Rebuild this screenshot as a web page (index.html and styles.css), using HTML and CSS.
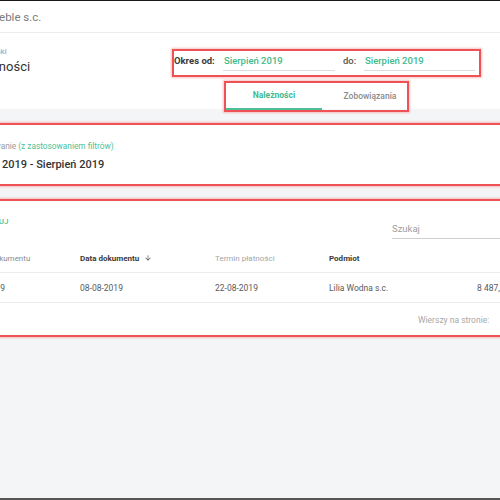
FILE: index.html
```html
<!DOCTYPE html>
<html lang="pl">
<head>
<meta charset="utf-8">
<title>Należności</title>
<link rel="stylesheet" href="styles.css">
</head>
<body>
<div class="page">
  <header class="topbar"><span class="company">Meble s.c.</span></header>
  <section class="subheader">
    <div class="titles">
      <div class="crumb">Rozrachunki</div>
      <h1 class="title">Należności</h1>
    </div>
    <div class="period hl">
      <span class="plabel">Okres od:</span>
      <div class="pinput">Sierpień 2019</div>
      <span class="plabel plabel-to">do:</span>
      <div class="pinput pinput-2">Sierpień 2019</div>
    </div>
  </section>
  <nav class="tabsrow">
    <div class="tabs hl">
      <div class="tab active">Należności</div>
      <div class="tab">Zobowiązania</div>
    </div>
  </nav>
  <section class="card card-summary hl">
    <div class="sum-label">Podsumowanie <span class="green">(z zastosowaniem filtrów)</span></div>
    <div class="sum-value">Sierpień 2019 - Sierpień 2019</div>
  </section>
  <section class="card card-table hl">
    <div class="toolbar">
      <span class="export">EKSPORTUJ</span>
      <div class="search">Szukaj</div>
    </div>
    <div class="trow thead">
      <span class="th-muted">Numer dokumentu</span>
      <span class="th-bold">Data dokumentu<svg class="sort" width="8" height="8" viewBox="0 0 24 24"><path d="M20 12l-1.41-1.41L13 16.17V4h-2v12.17l-5.58-5.59L4 12l8 8 8-8z" fill="#555"/></svg></span>
      <span class="th-light">Termin płatności</span>
      <span class="th-bold">Podmiot</span>
      <span class="th-bold num">Kwota</span>
    </div>
    <div class="trow">
      <span>FV/1/2019</span>
      <span>08-08-2019</span>
      <span>22-08-2019</span>
      <span>Lilia Wodna s.c.</span>
      <span>8 487,00 zł</span>
    </div>
    <div class="tfoot">Wierszy na stronie:</div>
  </section>
</div>
</body>
</html>
```
FILE: styles.css
```css
* { box-sizing: border-box; margin: 0; padding: 0; }
body { margin: 0; font-family: Roboto, "Liberation Sans", sans-serif; }
.page {
  width: 500px; height: 500px; overflow: hidden;
  background: #f4f5f7;
  border-top: 1px solid #1a1a1a;
  border-bottom: 2px solid #555;
}
.topbar {
  height: 32px; background: #fff; border-bottom: 1px solid #ececec;
  display: flex; align-items: center; padding-top: 1px;
}
.company { margin-left: -11px; font-size: 11.5px; color: #7b7b7b; white-space: nowrap; }
.subheader {
  height: 49px; background: #fff; border-bottom: 1px solid #ececec;
  display: flex; align-items: flex-start;
}
.titles { flex: 0 0 206px; margin-left: -34px; padding-top: 13px; white-space: nowrap; }
.crumb { margin-left: -3px; font-size: 8px; line-height: 12px; color: #9a9a9a; }
.title { font-size: 13px; line-height: 18px; font-weight: 400; color: #333; }
.hl { border: 2px solid #ef5254; box-shadow: 0 0 2px 1px rgba(239, 82, 84, .35); }
.period {
  margin-top: 16px; flex: 0 0 309px; height: 28px;
  display: flex; align-items: flex-start;
}
.plabel { flex: 0 0 49px; font-size: 9.5px; font-weight: 700; color: #3a3a3a; line-height: 20px; white-space: nowrap; }
.plabel-to { flex: 0 0 29px; padding-left: 8px; font-weight: 500; color: #555; }
.pinput {
  flex: 0 0 112px; height: 20px; border-bottom: 1px solid #dcdcdc;
  font-size: 9.5px; font-weight: 500; color: #3fb98d; line-height: 20px; padding-left: 1px; white-space: nowrap;
}
.pinput-2 { flex-basis: 111px; }
.tabsrow { height: 28px; background: #fff; padding-left: 224px; }
.tabs { margin-top: -1px; width: 185px; height: 31px; display: flex; }
.tab {
  flex: 0 0 96px; height: 27px; text-align: center;
  font-size: 8.5px; line-height: 27px; color: #8a8a8a; font-weight: 500; white-space: nowrap;
}
.tab.active { color: #3fb98d; font-weight: 700; border-bottom: 2px solid #4cbf98; line-height: 25px; }
.card { background: #fff; margin-left: -60px; width: 720px; }
.card-summary { margin-top: 14px; height: 63px; padding: 15px 0 0 17px; white-space: nowrap; }
.sum-label { font-size: 8.3px; line-height: 12px; color: #9a9a9a; }
.green { color: #4cbf98; }
.sum-value { margin-top: 5px; font-size: 11px; line-height: 16px; font-weight: 500; color: #333; }
.card-table { margin-top: 13px; height: 138px; padding-left: 22px; }
.toolbar { height: 42px; display: flex; align-items: flex-start; }
.export { flex: 0 0 428px; margin-top: 15px; font-size: 8px; line-height: 12px; font-weight: 500; color: #4cbf98; }
.search {
  flex: 0 0 150px; margin-top: 18px; height: 20px; border-bottom: 1px solid #cfcfcf;
  font-size: 9.5px; line-height: 19px; color: #9e9e9e;
}
.trow {
  display: grid; grid-template-columns: 116px 135px 114px 148px 62px;
  height: 30px; align-items: center; border-bottom: 1px solid #ececec;
  font-size: 8.5px; color: #5a5a5a; white-space: nowrap;
}
.thead { font-size: 8px; padding-top: 1px; }
.num { justify-self: end; }
.th-muted { color: #8a8a8a; }
.th-light { color: #a5a5a5; }
.th-bold { font-weight: 700; color: #3a3a3a; display: flex; align-items: center; }
.sort { margin-left: 5px; }
.tfoot { height: 32px; padding: 2px 0 0 454px; font-size: 8.5px; line-height: 30px; color: #a8a8a8; white-space: nowrap; }
```
